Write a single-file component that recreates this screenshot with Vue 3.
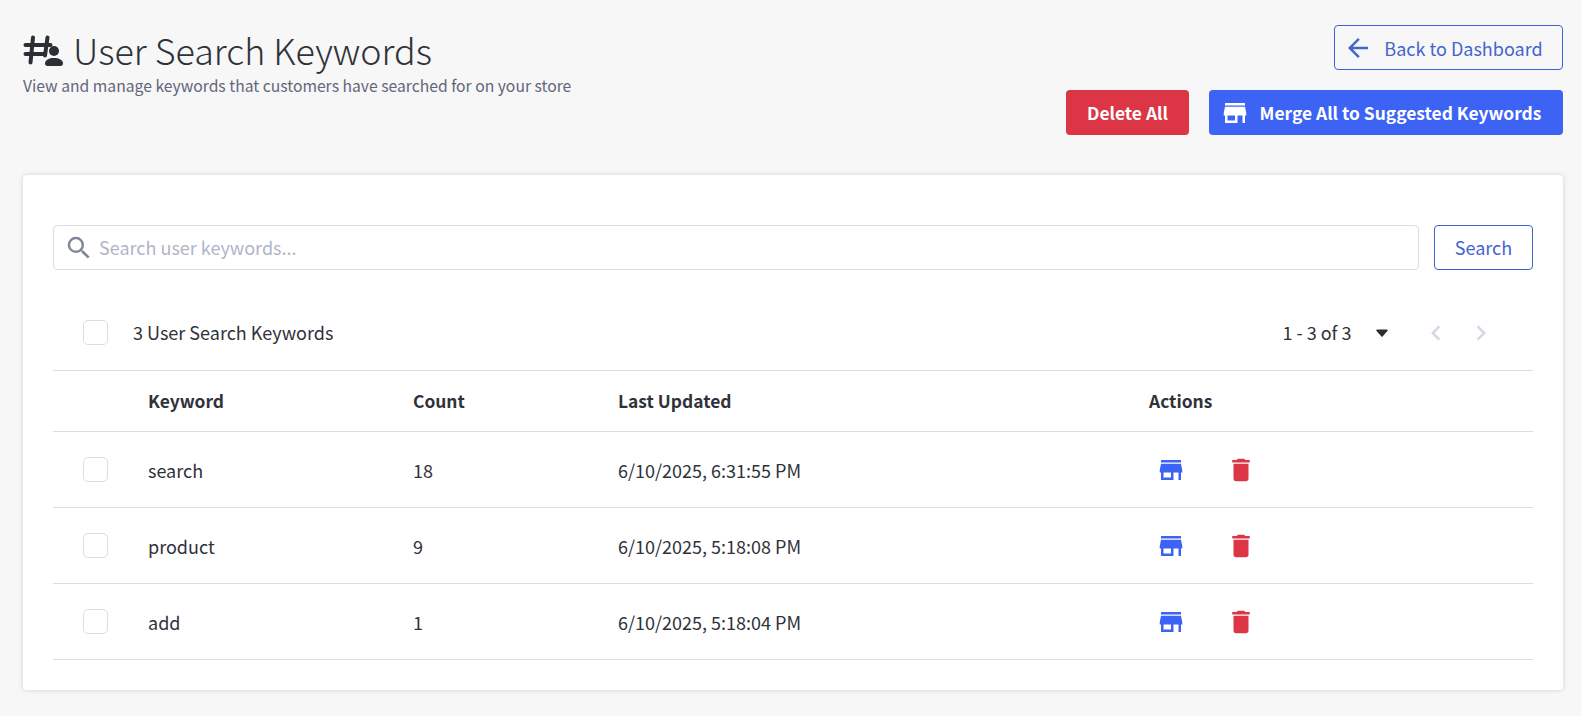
<script setup>
const rows = [
  { keyword: 'search', count: 18, updated: '6/10/2025, 6:31:55 PM' },
  { keyword: 'product', count: 9, updated: '6/10/2025, 5:18:08 PM' },
  { keyword: 'add', count: 1, updated: '6/10/2025, 5:18:04 PM' }
]
const store = 'M20 4H4v2h16V4zm1 10v-2l-1-5H4l-1 5v2h1v6h10v-6h4v6h2v-6h1zm-9 4H6v-4h6v4z'
const trash = 'M6 19c0 1.1.9 2 2 2h8c1.1 0 2-.9 2-2V7H6v12zM19 4h-3.5l-1-1h-5l-1 1H5v2h14V4z'
</script>

<template>
  <div class="page">
    <header class="head">
      <div class="titles">
        <h1 class="title">
          <svg class="title-icon" viewBox="0 0 40 32" aria-hidden="true">
            <path d="M10 2.500 7.500 27.500M24.500 2.500 22 20.500M2.500 10h25M2.500 19h19" fill="none" stroke="currentColor" stroke-width="4" stroke-linecap="round"/>
            <circle cx="31" cy="16" r="5" fill="currentColor"/>
            <path d="M22 28.500c0-3.500 4-5.500 9-5.500s9 2 9 5.500c0 1.500-1 2.500-2.500 2.500h-13c-1.500 0-2.500-1-2.500-2.500z" fill="currentColor"/>
          </svg>
          <span>User Search Keywords</span>
        </h1>
        <p class="sub">View and manage keywords that customers have searched for on your store</p>
      </div>
      <div class="head-actions">
        <button class="btn outline back">
          <svg class="ico" viewBox="0 0 24 24"><path d="M20 11H7.830l5.590-5.590L12 4l-8 8 8 8 1.410-1.410L7.830 13H20v-2z"/></svg>
          Back to Dashboard
        </button>
        <div class="btn-row">
          <button class="btn danger">Delete All</button>
          <button class="btn primary">
            <svg class="ico" viewBox="0 0 24 24"><path :d="store"/></svg>
            Merge All to Suggested Keywords
          </button>
        </div>
      </div>
    </header>

    <section class="card">
      <div class="search-row">
        <div class="search-box">
          <svg class="search-ico" viewBox="0 0 24 24"><path d="M15.500 14h-.790l-.280-.270A6.471 6.471 0 0 0 16 9.500 6.500 6.500 0 1 0 9.500 16c1.610 0 3.090-.590 4.230-1.570l.270.280v.790l5 4.990L20.490 19l-4.990-5zm-6 0C7.010 14 5 11.990 5 9.500S7.010 5 9.500 5 14 7.010 14 9.500 11.990 14 9.500 14z"/></svg>
          <input class="search-input" placeholder="Search user keywords..." />
        </div>
        <button class="btn outline search-btn">Search</button>
      </div>

      <div class="toolbar">
        <span class="check"></span>
        <span class="count-label">3 User Search Keywords</span>
        <div class="pager">
          <span class="range">1 - 3 of 3</span>
          <svg class="caret" viewBox="0 0 12 8"><path d="M1 .500h10a.8.8 0 0 1 .6 1.300L6.800 7.300a1 1 0 0 1-1.600 0L.4 1.800A.8.8 0 0 1 1 .500z"/></svg>
          <svg class="chev" viewBox="0 0 24 24"><path d="M15.410 7.410 14 6l-6 6 6 6 1.410-1.410L10.830 12z"/></svg>
          <svg class="chev" viewBox="0 0 24 24"><path d="M10 6 8.590 7.410 13.170 12l-4.580 4.590L10 18l6-6z"/></svg>
        </div>
      </div>

      <div class="row head-row">
        <span></span>
        <span>Keyword</span>
        <span>Count</span>
        <span>Last Updated</span>
        <span>Actions</span>
      </div>
      <div v-for="r in rows" :key="r.keyword" class="row">
        <span class="check"></span>
        <span>{{ r.keyword }}</span>
        <span>{{ r.count }}</span>
        <span>{{ r.updated }}</span>
        <span class="actions">
          <svg class="act blue" viewBox="0 0 24 24"><path :d="store"/></svg>
          <svg class="act red" viewBox="0 0 24 24"><path :d="trash"/></svg>
        </span>
      </div>
    </section>
  </div>
</template>

<style>
html, body { margin: 0; background: #f7f7f7; }
</style>

<style scoped>
.page {
  box-sizing: border-box;
  height: 716px;
  padding: 25px 18px 0 23px;
  background: #f7f7f7;
  font-family: "Noto Sans CJK SC", "Noto Sans", sans-serif;
  color: #30323a;
  font-size: 18px;
  overflow: hidden;
}
.head { display: flex; justify-content: space-between; height: 150px; }
.title {
  display: flex;
  align-items: center;
  gap: 10px;
  margin: 0;
  font-size: 35.9px;
  font-weight: 300;
  line-height: 48px;
}
.title-icon { width: 40px; height: 32px; margin-top: 4px; color: #2c2e35; flex: none; }
.sub { margin: 2px 0 0; font-size: 15.7px; line-height: 22px; color: #62667a; }
.head-actions { display: flex; flex-direction: column; align-items: flex-end; gap: 20px; }
.btn-row { display: flex; gap: 20px; }
.btn {
  box-sizing: border-box;
  display: inline-flex;
  align-items: center;
  justify-content: center;
  height: 45px;
  padding: 0;
  border-radius: 4px;
  border: 1px solid transparent;
  font-family: inherit;
  font-size: 18px;
  line-height: 24px;
}
.ico { width: 30px; height: 30px; fill: currentColor; margin-left: -11px; flex: none; }
.outline { background: transparent; border-color: #3f62d0; color: #4464cf; }
.back { width: 229px; gap: 11px; }
.danger { width: 123px; background: #dc3545; color: #fff; font-weight: 700; font-size: 17.4px; }
.primary { width: 354px; background: #3d63f5; color: #fff; font-weight: 700; font-size: 17.4px; gap: 10px; }
.card {
  box-sizing: border-box;
  height: 515px;
  padding: 50px 30px 0;
  background: #fff;
  border-radius: 4px;
  box-shadow: 0 0 5px rgba(0, 0, 0, .16);
}
.search-row { display: flex; gap: 15px; }
.search-box {
  box-sizing: border-box;
  flex: 1;
  height: 45px;
  display: flex;
  align-items: center;
  gap: 5px;
  padding: 0 11px 0 10px;
  border: 1px solid #dcdde3;
  border-radius: 4px;
}
.search-ico { width: 30px; height: 30px; fill: #808599; flex: none; }
.search-input {
  flex: 1;
  border: 0;
  outline: 0;
  padding: 0 0 2px;
  font: inherit;
  font-size: 18px;
  color: #30323a;
  background: transparent;
}
.search-input::placeholder { color: #b1b5c8; opacity: 1; }
.search-btn { width: 99px; background: #fff; padding-bottom: 2px; }
.toolbar {
  box-sizing: border-box;
  display: flex;
  align-items: center;
  height: 101px;
  padding: 25px 30px 0;
  border-bottom: 1px solid #dcdde3;
}
.check {
  box-sizing: border-box;
  display: block;
  width: 25px;
  height: 25px;
  border: 1px solid #dcdde3;
  border-radius: 5px;
  background: #fff;
}
.count-label { margin-left: 25px; padding-bottom: 2px; }
.range { padding-bottom: 2px; }
.pager { margin-left: auto; display: flex; align-items: center; margin-right: 7.5px; }
.caret { width: 12px; height: 8px; margin: 0 0 0 24px; fill: #2c2e35; flex: none; }
.chev { width: 30px; height: 30px; fill: #d5d8e2; margin-left: 15px; flex: none; }
.caret + .chev { margin-left: 33px; }
.row {
  box-sizing: border-box;
  display: grid;
  grid-template-columns: 65px 265px 205px 531px 1fr;
  align-items: center;
  height: 76px;
  padding-left: 30px;
  border-bottom: 1px solid #dcdde3;
}
.head-row { height: 61px; font-weight: 700; font-size: 17.4px; padding-bottom: 2px; }
.actions { display: flex; align-items: center; gap: 40px; margin-left: 7px; }
.act { width: 30px; height: 30px; flex: none; }
.blue { fill: #3d63f5; }
.red { fill: #dc3545; }
</style>
